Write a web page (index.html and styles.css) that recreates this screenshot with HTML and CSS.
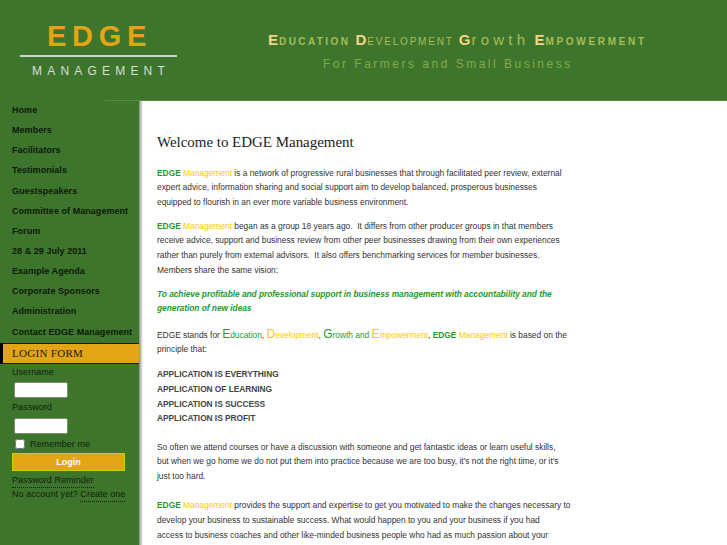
FILE: index.html
```html
<!DOCTYPE html>
<html lang="en">
<head>
    <meta charset="UTF-8">
    <title>EDGE Management</title>
    <link rel="stylesheet" href="styles.css">
</head>
<body>
    <header class="top">
        <div class="logo">
            <div class="logo-edge">EDGE</div>
            <div class="logo-mgmt">MANAGEMENT</div>
        </div>
        <div class="slogan">
            <div class="slogan-main"><b>E</b><span class="sc">DUCATION</span> <b>D</b><span class="sc thin">EVELOPMENT</span> <b>G</b><span class="thin wide">rowth</span> <b>E</b><span class="sc last">MPOWERMENT</span></div>
            <div class="slogan-sub">For Farmers and Small Business</div>
        </div>
    </header>
    <div class="page">
        <aside class="side">
            <nav class="menu">
                <a href="#">Home</a>
                <a href="#">Members</a>
                <a href="#">Facilitators</a>
                <a href="#">Testimonials</a>
                <a href="#">Guestspeakers</a>
                <a href="#">Committee of Management</a>
                <a href="#">Forum</a>
                <a href="#">28 &amp; 29 July 2011</a>
                <a href="#">Example Agenda</a>
                <a href="#">Corporate Sponsors</a>
                <a href="#">Administration</a>
                <a href="#">Contact EDGE Management</a>
            </nav>
            <h3 class="login-title">LOGIN FORM</h3>
            <form class="login">
                <label>Username</label>
                <input type="text" class="field">
                <label>Password</label>
                <input type="password" class="field">
                <div class="remember"><input type="checkbox"><span>Remember me</span></div>
                <button type="button" class="login-btn">Login</button>
                <div class="login-link"><a href="#">Password Reminder</a></div>
                <div class="login-link">No account yet? <a href="#">Create one</a></div>
            </form>
        </aside>
        <main class="content">
            <h1>Welcome to EDGE Management</h1>
            <p><span class="g">EDGE</span> <span class="y">Management</span> is a network of progressive rural businesses that through facilitated peer review, external expert advice, information sharing and social support aim to develop balanced, prosperous businesses equipped to flourish in an ever more variable business environment.</p>
            <p><span class="g">EDGE</span> <span class="y">Management</span> began as a group 18 years ago.&nbsp; It differs from other producer groups in that members receive advice, support and business review from other peer businesses drawing from their own experiences rather than purely from external advisors.&nbsp; It also offers benchmarking services for member businesses. Members share the same vision:</p>
            <p class="vision">To achieve profitable and professional support in business management with accountability and the generation of new ideas</p>
            <p class="stands">EDGE stands for <span class="cap-g">E</span><span class="gl">ducation</span>, <span class="cap-y">D</span><span class="yl">evelopment</span>, <span class="cap-g">G</span><span class="gl">rowth and</span> <span class="cap-y">E</span><span class="yl">mpowerment</span>, <span class="g">EDGE</span> <span class="y">Management</span> is based on the principle that:</p>
            <p class="caps">APPLICATION IS EVERYTHING<br>APPLICATION OF LEARNING<br>APPLICATION IS SUCCESS<br>APPLICATION IS PROFIT</p>
            <p class="gap">So often we attend courses or have a discussion with someone and get fantastic ideas or learn useful skills,<br>but when we go home we do not put them into practice because we are too busy, it's not the right time, or it's just too hard.</p>
            <p><span class="g">EDGE</span> <span class="y">Management</span> provides the support and expertise to get you motivated to make the changes necessary to develop your business to sustainable success. What would happen to you and your business if you had<br>access to business coaches and other like-minded business people who had as much passion about your</p>
        </main>
    </div>
</body>
</html>
```

FILE: styles.css
```css
* {
    box-sizing: border-box;
}
body {
    margin: 0;
    height: 545px;
    overflow: hidden;
    background-color: #3e752d;
    font-family: "Liberation Sans", Arial, sans-serif;
    color: #333333;
}
.top {
    display: flex;
    height: 100px;
    background-color: #3e752d;
}
.logo {
    width: 198px;
    padding: 20px 0 0 20px;
}
.logo-edge {
    width: 157px;
    height: 37px;
    border-bottom: 2px solid #cfd8c8;
    color: #e2a516;
    font-size: 29px;
    font-weight: bold;
    line-height: 32px;
    letter-spacing: 5.7px;
    text-align: center;
    padding-left: 2px;
}
.logo-mgmt {
    width: 157px;
    margin-top: 7px;
    color: #d6dfd2;
    font-size: 12px;
    line-height: 14px;
    letter-spacing: 5.2px;
    text-align: center;
    padding-left: 5px;
}
.slogan {
    padding: 32px 0 0 70px;
}
.slogan-main {
    color: #a7bd56;
    font-size: 10px;
    font-weight: bold;
    line-height: 16px;
    letter-spacing: 2.4px;
    white-space: nowrap;
}
.slogan-main b {
    color: #f3d57f;
    font-size: 15px;
    letter-spacing: 1px;
}
.thin {
    font-weight: normal;
    letter-spacing: 1.8px;
}
.wide {
    font-size: 15px;
    letter-spacing: 4.2px;
}
.last {
    letter-spacing: 2.7px;
}
.slogan-sub {
    margin: 7px 0 0 55px;
    color: #84a94a;
    font-size: 12px;
    line-height: 14px;
    letter-spacing: 2.5px;
    white-space: nowrap;
}
.page {
    display: flex;
    height: 445px;
}
.side {
    width: 139px;
    flex-shrink: 0;
    padding-top: 1px;
    background: linear-gradient(#5f8e3b, #5f8e3b) no-repeat 105px 0 / 34px 1px;
}
.menu {
    display: flex;
    flex-direction: column;
}
.menu a {
    height: 20.15px;
    padding-left: 12px;
    color: #0c1a08;
    font-size: 9px;
    font-weight: bold;
    line-height: 18px;
    letter-spacing: 0.05px;
    text-decoration: none;
    white-space: nowrap;
}
.login-title {
    height: 21px;
    margin: 0;
    padding-left: 9px;
    background-color: #e2a516;
    border-top: 1px solid #1b1b10;
    border-bottom: 1px solid #1b1b10;
    border-left: 3px solid #000000;
    color: #1a1a10;
    font-family: "Liberation Serif", serif;
    font-size: 11px;
    font-weight: normal;
    line-height: 19px;
    letter-spacing: 0.3px;
}
.login {
    display: flex;
    flex-direction: column;
    padding: 0 0 0 12px;
    font-size: 9px;
    color: #0f1f0a;
}
.login label {
    height: 12px;
    margin-top: 2px;
    line-height: 12px;
    letter-spacing: 0.05px;
}
.field {
    width: 54px;
    height: 16px;
    margin: 4px 0 1px 2px;
    background-color: #ffffff;
    border: 1px solid #7f8f78;
    border-radius: 2px;
}
.login label + .field + label + .field {
    margin-top: 5px;
}
.remember {
    display: flex;
    align-items: center;
    height: 14px;
    margin-top: 2px;
    letter-spacing: 0.05px;
}
.remember input {
    width: 10px;
    height: 10px;
    margin: 0 5px 0 3px;
}
.login-btn {
    width: 113px;
    height: 18px;
    margin-top: 2px;
    padding: 0;
    background-color: #e2a516;
    border: 1px solid #bfd400;
    color: #ffffff;
    font-family: "Liberation Sans", Arial, sans-serif;
    font-size: 9px;
    font-weight: bold;
}
.login-link {
    height: 14px;
    line-height: 12px;
    letter-spacing: 0.05px;
}
.login-btn + .login-link {
    margin-top: 3px;
}
.login-link a {
    display: inline-block;
    height: 14px;
    color: #0f1f0a;
    text-decoration: none;
    border-bottom: 1px dotted #0f1f0a;
}
.content {
    flex: 1;
    padding: 31px 0 0 18px;
    background: linear-gradient(to right, #8c8c8c, #ffffff) no-repeat 0 0 / 4px 100% #ffffff;
    border-top: 1px solid #5f8e3b;
    font-size: 8.4px;
    line-height: 14.6px;
}
.content h1 {
    margin: 0 0 13.5px;
    color: #1d1d1d;
    font-family: "Liberation Serif", serif;
    font-size: 15px;
    font-weight: normal;
    line-height: 20px;
    letter-spacing: -0.03px;
}
.content p {
    width: 415px;
    margin: 0 0 9.6px;
}
.g {
    color: #249a2b;
    font-weight: bold;
}
.y {
    color: #fcc800;
}
.gl {
    color: #249a2b;
}
.yl {
    color: #fcc800;
}
.cap-g {
    color: #249a2b;
    font-size: 12px;
}
.cap-y {
    color: #fcc800;
    font-size: 12px;
}
.content .vision {
    margin-bottom: 10.5px;
    color: #249a2b;
    font-weight: bold;
    font-style: italic;
    letter-spacing: -0.04px;
}
.content .stands {
    margin-bottom: 10.6px;
}
.caps {
    color: #444444;
    font-weight: bold;
    letter-spacing: -0.05px;
}
.content .gap {
    margin-top: 14px;
    margin-bottom: 15px;
}
```
